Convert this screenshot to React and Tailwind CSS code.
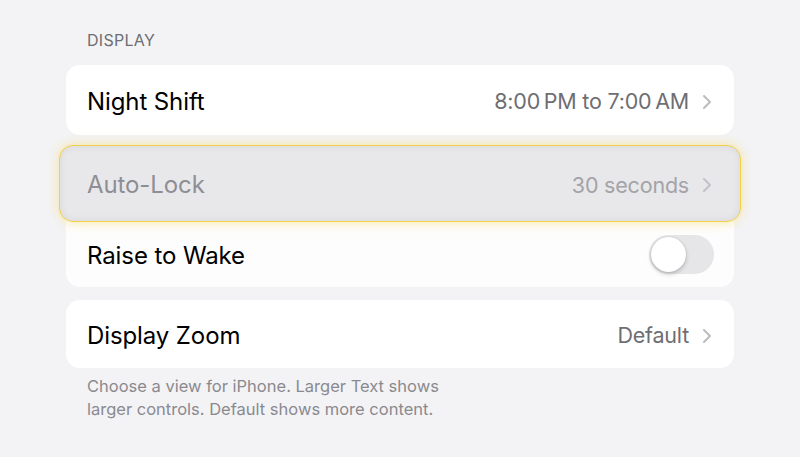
import React from "react";

const Chevron = ({ className = "" }) => (
  <svg
    width="10"
    height="16"
    viewBox="0 0 10 16"
    fill="none"
    className={className}
  >
    <path
      d="M2 2l6 6-6 6"
      stroke="currentColor"
      strokeWidth="2"
      strokeLinecap="round"
      strokeLinejoin="round"
    />
  </svg>
);

const Toggle = ({ on = false }) => (
  <div
    className={`flex h-[39px] w-[65px] items-center rounded-full p-[2px] ${
      on ? "justify-end bg-[#34c759]" : "justify-start bg-[#e6e6e9]"
    }`}
  >
    <div className="h-[35px] w-[35px] rounded-full bg-white shadow-[0_2px_4px_rgba(0,0,0,0.22),0_0_1px_rgba(0,0,0,0.2)]" />
  </div>
);

const Row = ({ label, value, height = "h-[70px]" }) => (
  <div className={`flex ${height} items-center justify-between pl-[21px] pr-[22px] pt-[3px]`}>
    <span className="text-[24px] tracking-[-0.1px] text-black">{label}</span>
    <div className="flex items-center gap-[13px] text-[#6e6e73]">
      <span className="text-[21.5px] tracking-[-0.2px]">{value}</span>
      <Chevron className="text-[#bcbcc0]" />
    </div>
  </div>
);

export default function App() {
  return (
    <div
      className="h-[457px] w-[800px] overflow-hidden bg-[#f3f3f6]"
      style={{ fontFamily: "Inter, 'Noto Sans', sans-serif" }}
    >
      <div className="flex flex-col px-[66px] pt-[28px]">
        <div className="pl-[21px] text-[16px] tracking-[0.3px] text-[#6d6d72]">
          DISPLAY
        </div>

        <div className="mt-[13px] rounded-[14px] bg-white">
          <Row label="Night Shift" value={"8:00\u2009PM to 7:00\u2009AM"} />
        </div>

        <div className="mt-[10px] flex flex-col rounded-[14px] bg-[#fdfdfd]">
          {/* focused row sits a little proud of the group */}
          <div className="-mx-[7px] flex h-[77px] items-center justify-between rounded-[14px] border-[1.5px] border-[#f3d048] bg-[#e8e8eb] pl-[27px] pr-[28px] pt-[3px] shadow-[0_0_12px_rgba(250,215,80,0.55),inset_0_0_8px_rgba(0,0,0,0.07)]">
            <span className="text-[24px] tracking-[-0.1px] text-[#8e8e93]">
              Auto-Lock
            </span>
            <div className="flex items-center gap-[13px] text-[#a3a3a7]">
              <span className="text-[21.5px] tracking-[-0.2px]">30 seconds</span>
              <Chevron className="text-[#c3c3c7]" />
            </div>
          </div>
          <div className="flex h-[65px] items-center justify-between pl-[21px] pr-[20px]">
            <span className="pt-[3px] text-[24px] tracking-[-0.1px] text-black">
              Raise to Wake
            </span>
            <Toggle />
          </div>
        </div>

        <div className="mt-[13px] rounded-[14px] bg-white">
          <Row label="Display Zoom" value="Default" height="h-[68px]" />
        </div>

        <p className="mt-[7px] pl-[21px] text-[16.5px] leading-[23px] text-[#8a8a8e]">
          Choose a view for iPhone. Larger Text shows
          <br />
          larger controls. Default shows more content.
        </p>
      </div>
    </div>
  );
}
